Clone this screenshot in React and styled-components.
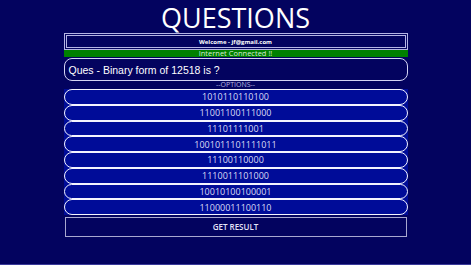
import React from 'react'
import styled, { createGlobalStyle } from 'styled-components'

const options = [
  '1010110110100',
  '11001100111000',
  '11101111001',
  '1001011101111011',
  '11100110000',
  '1110011101000',
  '10010100100001',
  '11000011100110',
]

const Global = createGlobalStyle`
  html, body {
    margin: 0;
    padding: 0;
    background: #03035f;
  }
  * { box-sizing: border-box; }
`

const App = () => (
  <>
    <Global />
    <Page>
      <Title>QUESTIONS</Title>
      <Panel>
        <Welcome>Welcome - jf@gmail.com</Welcome>
        <Status>Internet Connected !!</Status>
        <Question>Ques - Binary form of 12518 is ?</Question>
        <OptionsLabel>--OPTIONS--</OptionsLabel>
        <OptionList>
          {options.map((o) => (
            <Option key={o}>{o}</Option>
          ))}
        </OptionList>
        <ResultButton>GET RESULT</ResultButton>
      </Panel>
    </Page>
  </>
)

/* page */
const Page = styled.div`
  height: 265px;
  display: flex;
  flex-direction: column;
  align-items: center;
  font-family: "Open Sans", "Noto Sans", sans-serif;
  border-bottom: 1px solid #3a3a9a;
`

const Title = styled.h1`
  margin: 0;
  height: 33px;
  padding-top: 3px;
  font-size: 27px;
  line-height: 30px;
  font-weight: 400;
  color: #ffffff;
  white-space: nowrap;
`

const Panel = styled.div`
  width: 344px;
  display: flex;
  flex-direction: column;
`

/* header strips */
const Welcome = styled.div`
  height: 17px;
  border: 3px double #b4b4e4;
  color: #ffffff;
  font-size: 6px;
  font-weight: 700;
  display: flex;
  align-items: center;
  justify-content: center;
`

const Status = styled.div`
  height: 7px;
  background: #008000;
  color: #d6ecd6;
  font-size: 7.5px;
  line-height: 7px;
  text-align: center;
`

const Question = styled.div`
  height: 23px;
  margin-top: 1px;
  border: 1.5px solid #d4d4f4;
  border-radius: 8px;
  padding-left: 4px;
  display: flex;
  align-items: center;
  color: #ffffff;
  font-family: "Liberation Sans", sans-serif;
  font-size: 10.5px;
`

const OptionsLabel = styled.div`
  height: 8px;
  font-size: 7px;
  line-height: 8px;
  color: #b8b8e0;
  text-align: center;
`

/* options */
const OptionList = styled.div`
  background: #000c98;
  display: flex;
  flex-direction: column;
`

const Option = styled.div`
  height: 15.75px;
  border: 1.5px solid #f4f4ff;
  border-radius: 8px;
  color: #dcdcf6;
  font-size: 9px;
  display: flex;
  align-items: center;
  justify-content: center;
`

const ResultButton = styled.div`
  height: 20px;
  margin: 1.5px 1px 0;
  border: 1px solid #a8a8d0;
  background: #03035f;
  color: #e4e4f8;
  font-size: 8px;
  font-weight: 600;
  display: flex;
  align-items: center;
  justify-content: center;
`

export default App
